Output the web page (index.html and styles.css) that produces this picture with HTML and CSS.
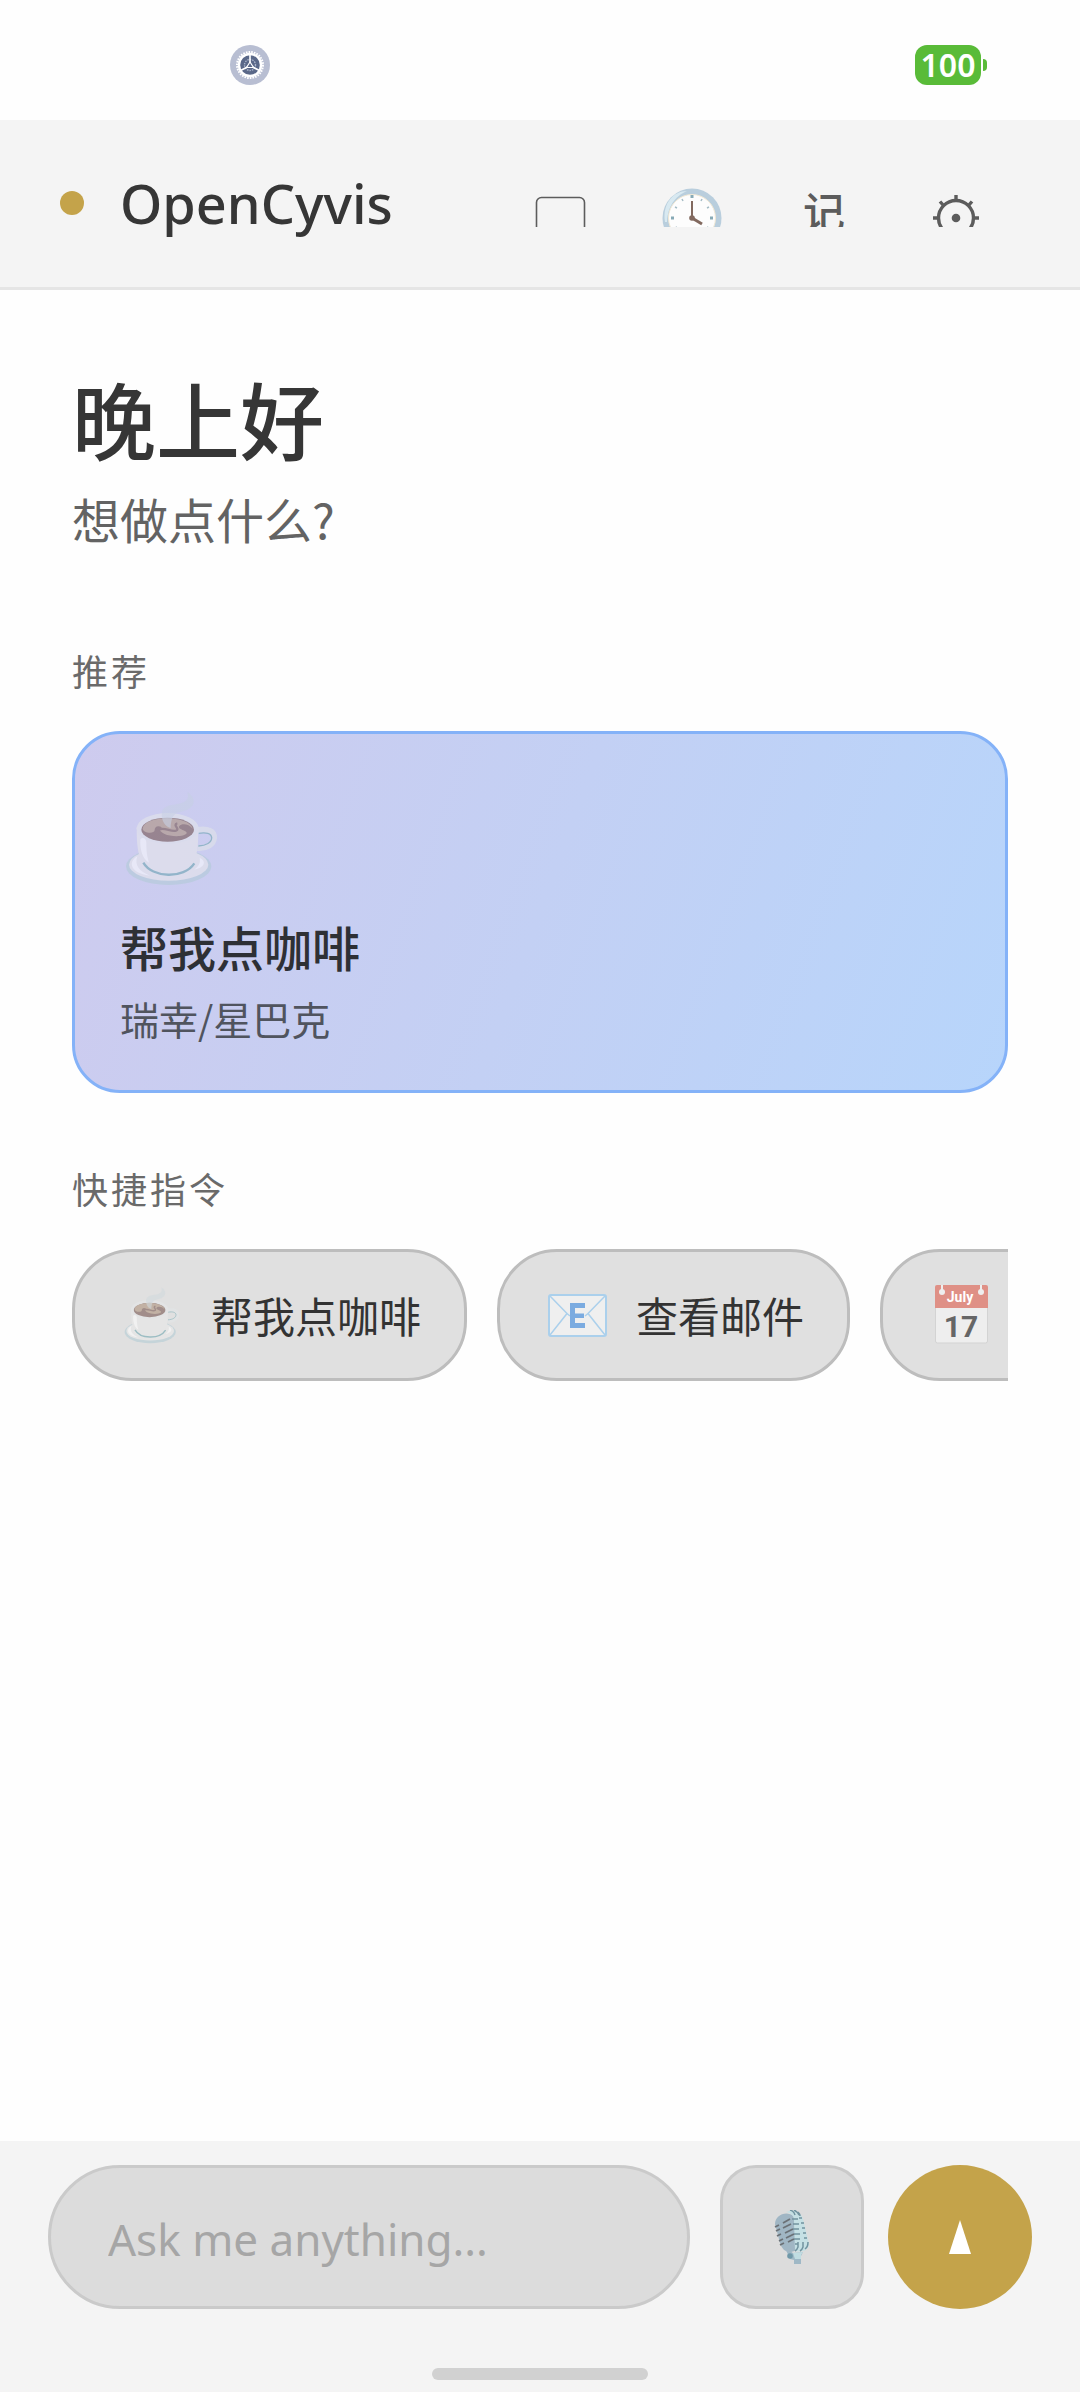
FILE: index.html
```html
<!DOCTYPE html>
<html lang="zh-CN">
<head>
<meta charset="utf-8">
<meta name="viewport" content="width=device-width, initial-scale=1">
<title>OpenCyvis</title>
<link rel="stylesheet" href="styles.css">
</head>
<body>
<svg width="0" height="0" class="defs" aria-hidden="true">
  <symbol id="cup" viewBox="210 240 300 288">
    <g opacity=".55">
      <ellipse cx="356" cy="469" rx="128" ry="56" fill="#b0cbd5"/>
      <ellipse cx="356" cy="464" rx="119" ry="48" fill="#eaeaea"/>
      <path d="M262 439c-27 15-25 50 38 58c-30-12-48-30-38-58zM449 443c22 10 15 30-17 36c14-10 20-20 17-36z" fill="#fff"/>
      <path d="M442 360c30-6 52 4 50 24c-2 20-22 32-50 30" fill="none" stroke="#e2e6e8" stroke-width="18"/>
      <path d="M446 370c22-4 38 0 39 13c0 14-16 24-40 25" fill="none" stroke="#66a2ac" stroke-width="4"/>
      <path d="M260 350c0 62 4 90 25 118c28 38 112 38 138 0c20-26 22-60 22-118z" fill="#eaeaea"/>
      <path d="M280 458c26 46 122 50 153 2" fill="none" stroke="#66a2ac" stroke-width="7"/>
      <ellipse cx="353" cy="355" rx="93" ry="46" fill="#e6e8ea"/>
      <ellipse cx="353" cy="359" rx="79" ry="36" fill="#6e4b44"/>
      <path d="M278 356c4-42 140-42 150 0c-12-16-34-16-40-8c-8 10 26 14 22 22c-8 12-50 10-66 2c-16-8-18-14-8-20c-16-8-22 2-22 8c0 12-34 10-36-4z" fill="#aa8c74"/>
      <path d="M328 358c18-6 34 8 50 4c14-4-12-18 4-22" fill="none" stroke="#6e4b44" stroke-width="7"/>
      <path d="M271 388c6-8 18-4 18 10c0 26 2 40 8 60c-20-10-28-42-26-70z" fill="#fff"/>
      <path d="M336 322c-6-40 30-34 56-42c20-6 26-16 20-34c26 16 26 42-2 54c-24 10-46 2-48 54c-12-2-24-14-26-32z" fill="#c5d3dc" opacity=".6"/>
    </g>
  </symbol>
</svg>
<div class="app">
  <div class="status">
    <svg class="status-gear" viewBox="0 0 40 40" aria-hidden="true">
      <circle cx="20" cy="20" r="20" fill="#b8bed2"/>
      <circle cx="20" cy="20" r="13" fill="none" stroke="#fff" stroke-width="2" stroke-dasharray="1.6 1.1"/>
      <circle cx="20" cy="20" r="11" fill="#5a6888" stroke="#fff" stroke-width="2.4"/>
      <circle cx="20" cy="20" r="5.5" fill="none" stroke="#a9b3c9" stroke-width="1.4" stroke-dasharray="1.5 1"/>
      <path d="M20 9v9M18.500 21.500l-8 4M21.500 21.500l8 4" stroke="#fff" stroke-width="1.600"/>
      <path d="M20 17l3.500 5.500h-7z" fill="#5a6888" stroke="#fff" stroke-width="1.200"/>
    </svg>
    <div class="battery"><span class="battery-level">100</span><i class="battery-tip"></i></div>
  </div>

  <header class="header">
    <i class="dot"></i>
    <h1 class="brand">OpenCyvis</h1>
    <nav class="tools">
      <button class="tool" aria-label="屏幕"><svg viewBox="0 0 96 48"><rect x="24.500" y="18.500" width="48" height="46" rx="5" fill="none" stroke="#5c5c5c" stroke-width="1.600"/></svg></button>
      <button class="tool" aria-label="历史"><svg viewBox="0 0 96 48">
        <circle cx="48" cy="39" r="29.500" fill="#b9cedd"/>
        <path d="M21 43C18 24 30 12 43 12C34 16 24 24 23 43z" fill="#d8e9f1"/>
        <circle cx="48" cy="39" r="23.500" fill="#fdfdfd" stroke="#f1e8d4"/>
        <g fill="#87aab6"><path d="M46.500 16h3v3h-3zM27 37.500h3v3h-3zM66 37.500h3v3h-3z"/></g>
        <path d="M38 20l1 2M58 20l-1 2M31 28l2 1M65 28l-2 1M31 49l2-1M65 49l-2-1" stroke="#a5bcc5" stroke-width="1.500"/>
        <path d="M48 22v17" stroke="#82695f" stroke-width="2"/><path d="M48 39l10 6" stroke="#82695f" stroke-width="3"/><circle cx="48" cy="39" r="2.800" fill="#82695f"/></svg></button>
      <button class="tool tool-text">记</button>
      <button class="tool" aria-label="设置"><svg viewBox="0 0 96 48" fill="none" stroke="#5c5c5c" stroke-width="3.400"><circle cx="48" cy="39" r="17.500"/><path d="M48 21v-5M30 39h-5M66 39h5M35.500 26.500l-3.500-4M60.500 26.500l3.500-4"/><circle cx="48" cy="39" r="4.300" fill="#5c5c5c" stroke="none"/></svg></button>
    </nav>
  </header>

  <main class="main">
    <h2 class="greeting">晚上好</h2>
    <p class="prompt">想做点什么?</p>

    <h3 class="label">推荐</h3>
    <button class="card">
      <svg class="card-icon" aria-hidden="true"><use href="#cup"/></svg>
      <span class="card-title">帮我点咖啡</span>
      <span class="card-sub">瑞幸/星巴克</span>
    </button>

    <h3 class="label">快捷指令</h3>
    <div class="chips">
      <button class="chip"><svg class="chip-icon" aria-hidden="true"><use href="#cup" x="4" width="60" height="60"/></svg>帮我点咖啡</button>
      <button class="chip"><svg class="chip-icon" viewBox="0 0 72 60" aria-hidden="true">
        <rect x="7" y="10" width="57" height="41" rx="2" fill="#efefef" stroke="#abd0ec" stroke-width="2"/>
        <path d="M8 11l17 17.500L8 50M63 11L46 28.500L63 50M25 28.500l3 2.500M46 28.500l-3 2.500" fill="none" stroke="#abd0ec" stroke-width="1.500"/>
        <path d="M28 18h15v5H33v5.500h9v4.500h-9v5h10v5H28z" fill="#7babe0"/></svg>查看邮件</button>
      <button class="chip chip-last" aria-label="日历"><svg class="chip-icon" viewBox="0 0 72 60" aria-hidden="true">
        <rect x="10.500" y="1" width="52" height="57" rx="2" fill="#eee" stroke="#d3d3d3"/>
        <path d="M10 23V2q0-2 2-2h49q2 0 2 2v21z" fill="#df9086"/>
        <path d="M17 0v6M56 0v6" stroke="#eee" stroke-width="2"/><circle cx="17" cy="7" r="3" fill="#eee"/><circle cx="56" cy="7" r="3" fill="#eee"/>
        <text x="35" y="17" class="cal-month">July</text><text x="36" y="52" class="cal-day">17</text></svg></button>
    </div>
  </main>

  <footer class="footer">
    <form class="composer">
      <input class="ask" type="text" placeholder="Ask me anything..." aria-label="Ask me anything">
      <button class="mic" type="button" aria-label="语音"><svg viewBox="0 0 36 54">
        <path d="M11 38l8 5 10-1-2 4v8h-7v-4l-4-1z" fill="#9fb8c6"/><path d="M19 43l10-1-2 3v4h-6z" fill="#c0dde2"/>
        <path d="M1 14C1 5 12 0 20 6l2 34c-8 5-14 0-16-7z" fill="#a0b6c4"/>
        <path d="M12 2C20-2 27 2 29 9l6 25c0 6-7 9-14 7L20 10c0-4-3-7-8-8z" fill="#c5e0e4"/>
        <path d="M16 0q4 1 5 5M20 0q4 2 5 5M24 2q2 2 2 4M18 9h6M19 14h6M19 19h6M20 24h6M20 29h6M21 34h3M25 8h3M27 13h3M28 18h3M29 23h3M30 28h3M24 32v5q-1 3-3 4M29 32v5q-1 3-3 4M34 32q0 5-3 7" fill="none" stroke="#71939f" stroke-width="1.500"/>
        <path d="M9 13l7-4M9 18l8-4M11 23l8-4M12 28l8-4M14 32l6-3M1 17l4-2M2 21l4-2M3 26l4-2M5 31l4-2M6 35l4-2" stroke="#6b7176" stroke-width="1.800"/>
        <circle cx="16" cy="46" r="2.800" fill="#6f98a8"/></svg></button>
      <button class="send" type="button" aria-label="发送"><svg viewBox="0 0 22 34"><path d="M11 0l11 34H0z" fill="#fff"/></svg></button>
    </form>
    <i class="home-bar"></i>
  </footer>
</div>
</body>
</html>
```
FILE: styles.css
```css
* { box-sizing: border-box; }
body {
  margin: 0;
  background: #fefefe;
  color: #363636;
  font-family: "Noto Sans CJK SC", "Noto Sans", sans-serif;
}
button { border: 0; padding: 0; background: none; color: inherit; font: inherit; }
h1, h2, h3, p { margin: 0; }
i { display: block; }
.defs { position: absolute; }
.app { display: flex; flex-direction: column; min-height: 100vh; }

.status {
  display: flex;
  justify-content: space-between;
  align-items: center;
  height: 120px;
  padding: 10px 93px 0 230px;
}
.status-gear { width: 40px; height: 40px; }
.battery { display: flex; align-items: center; gap: 2px; }
.battery-level {
  width: 66px;
  height: 40px;
  border-radius: 12px;
  background: #59bb38;
  color: #fff;
  font: 600 32px/40px "Noto Sans", sans-serif;
  text-align: center;
}
.battery-tip { width: 4px; height: 12px; border-radius: 0 4px 4px 0; background: #59bb38; }

.header {
  display: flex;
  align-items: center;
  height: 170px;
  padding: 0 58px 1px 60px;
  background: #f4f4f4;
  border-bottom: 3px solid #e5e5e5;
}
.dot { width: 24px; height: 24px; margin-right: 36px; border-radius: 50%; background: #c4a34a; }
.brand { flex: 1; font: 500 54px/72px "Noto Sans", sans-serif; }
.tools { display: flex; }
.tool { display: flex; justify-content: center; width: 132px; height: 48px; overflow: hidden; color: #5c5c5c; }
.tool svg { flex: none; width: 96px; height: 48px; }
.tool-text { font-size: 42px; font-weight: 500; line-height: 62px; }

.main { flex: 1; padding: 78px 72px 48px; }
.greeting { font-size: 84px; font-weight: 500; line-height: 100px; }
.prompt { margin-top: 20px; color: #636363; font-size: 48px; line-height: 60px; }
.label {
  margin: 98px 0 37px;
  color: #6a6a6a;
  font-size: 36px;
  font-weight: 400;
  letter-spacing: 3px;
  line-height: 48px;
}
.card + .label { margin-top: 71px; }
.card {
  display: flex;
  flex-direction: column;
  width: 100%;
  padding: 56px 45px 48px;
  border: 3px solid #84b2f8;
  border-radius: 48px;
  background: linear-gradient(110deg, #cecbee, #c3d0f4 50%, #b7d5fb);
  text-align: left;
}
.card-icon { width: 100px; height: 96px; }
.card-title { margin-top: 30px; color: #2e3035; font-size: 48px; font-weight: 500; line-height: 60px; }
.card-sub { margin-top: 18px; color: #50545e; font-size: 39px; line-height: 48px; }

.chips { display: flex; gap: 30px; overflow: hidden; }
.chip {
  display: flex;
  flex: none;
  align-items: center;
  gap: 22px;
  height: 132px;
  padding: 0 43px 0 42px;
  border: 3px solid #bdbdbd;
  border-radius: 60px;
  background: #e0e0e0;
  color: #333;
  font-size: 42px;
  line-height: 60px;
}
.chip-icon { width: 72px; height: 60px; }
.chip-last { min-width: 360px; }
.cal-month { fill: #fff; font: 700 14px Roboto, sans-serif; text-anchor: middle; }
.cal-day { fill: #666; font: 700 30px Roboto, sans-serif; text-anchor: middle; }

.footer { padding: 24px 48px 12px; background: #f4f4f4; }
.composer { display: flex; }
.ask {
  flex: 1;
  min-width: 0;
  height: 144px;
  margin-right: 30px;
  padding: 4px 57px 0;
  border: 3px solid #cacaca;
  border-radius: 72px;
  background: #dcdcdc;
  font: 400 44px "Noto Sans", sans-serif;
}
.ask::placeholder { color: #a6a6a6; opacity: 1; }
.mic, .send { display: flex; align-items: center; justify-content: center; width: 144px; height: 144px; }
.mic { margin-right: 24px; border: 3px solid #cacaca; border-radius: 36px; background: #dcdcdc; }
.mic svg { width: 36px; height: 54px; }
.send { border-radius: 50%; background: #c4a34a; }
.send svg { width: 22px; height: 34px; }
.home-bar { width: 216px; height: 12px; margin: 59px auto 0; border-radius: 6px; background: #d1d1d1; }
```
